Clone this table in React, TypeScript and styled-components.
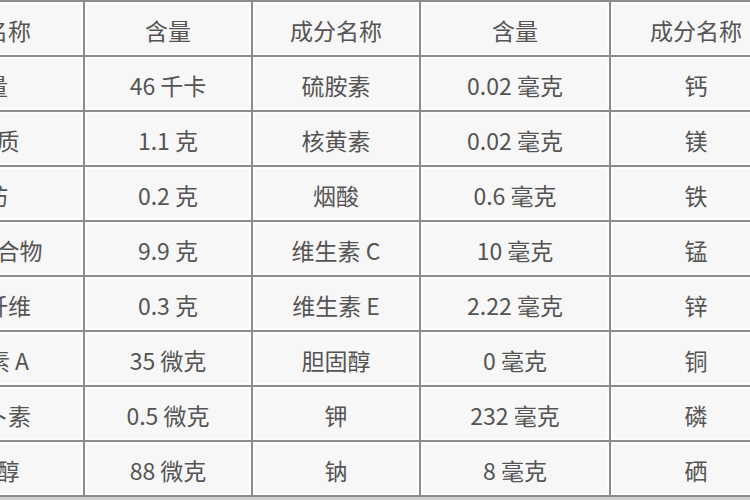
import styled, { createGlobalStyle } from 'styled-components'

const GlobalStyle = createGlobalStyle`
  html, body {
    margin: 0;
    padding: 0;
    background: #f7f7f7;
  }
  body {
    width: 750px;
    height: 500px;
    overflow: hidden;
  }
`

const Frame = styled.div`
  width: 750px;
  height: 500px;
  overflow: hidden;
  background: #cfcfcf;
`

const Table = styled.table`
  margin-left: -115px;
  border-collapse: collapse;
  table-layout: fixed;
  width: 896px;
  font-family: "Noto Sans CJK SC", "Noto Sans", sans-serif;
  font-size: 23px;
  color: #545454;
`

const Cell = styled.td`
  height: 50px;
  padding: 3px 0 0;
  text-align: center;
  vertical-align: middle;
  border: 2px solid #8c8c8c;
  background: #f7f7f7;
  box-shadow: inset 0 0 0 2px #fdfdfd;
  white-space: nowrap;
  overflow: hidden;
  line-height: 1;
  font-weight: 400;
`

const widths = [198, 168, 168, 190, 172]

const header = ['成分名称', '含量', '成分名称', '含量', '成分名称']

const rows = [
  ['热量', '46 千卡', '硫胺素', '0.02 毫克', '钙'],
  ['蛋白质', '1.1 克', '核黄素', '0.02 毫克', '镁'],
  ['脂肪', '0.2 克', '烟酸', '0.6 毫克', '铁'],
  ['碳水化合物', '9.9 克', '维生素 C', '10 毫克', '锰'],
  ['膳食纤维', '0.3 克', '维生素 E', '2.22 毫克', '锌'],
  ['维生素 A', '35 微克', '胆固醇', '0 毫克', '铜'],
  ['胡萝卜素', '0.5 微克', '钾', '232 毫克', '磷'],
  ['视黄醇', '88 微克', '钠', '8 毫克', '硒'],
]

export default function App() {
  return (
    <>
      <GlobalStyle />
      <Frame>
        <Table>
          <colgroup>
            {widths.map((w, i) => (
              <col key={i} style={{ width: w }} />
            ))}
          </colgroup>
          <tbody>
            <tr>
              {header.map((h, i) => (
                <Cell as="th" key={i}>
                  {h}
                </Cell>
              ))}
            </tr>
            {rows.map((r, ri) => (
              <tr key={ri}>
                {r.map((c, ci) => (
                  <Cell key={ci}>{c}</Cell>
                ))}
              </tr>
            ))}
          </tbody>
        </Table>
      </Frame>
    </>
  )
}
